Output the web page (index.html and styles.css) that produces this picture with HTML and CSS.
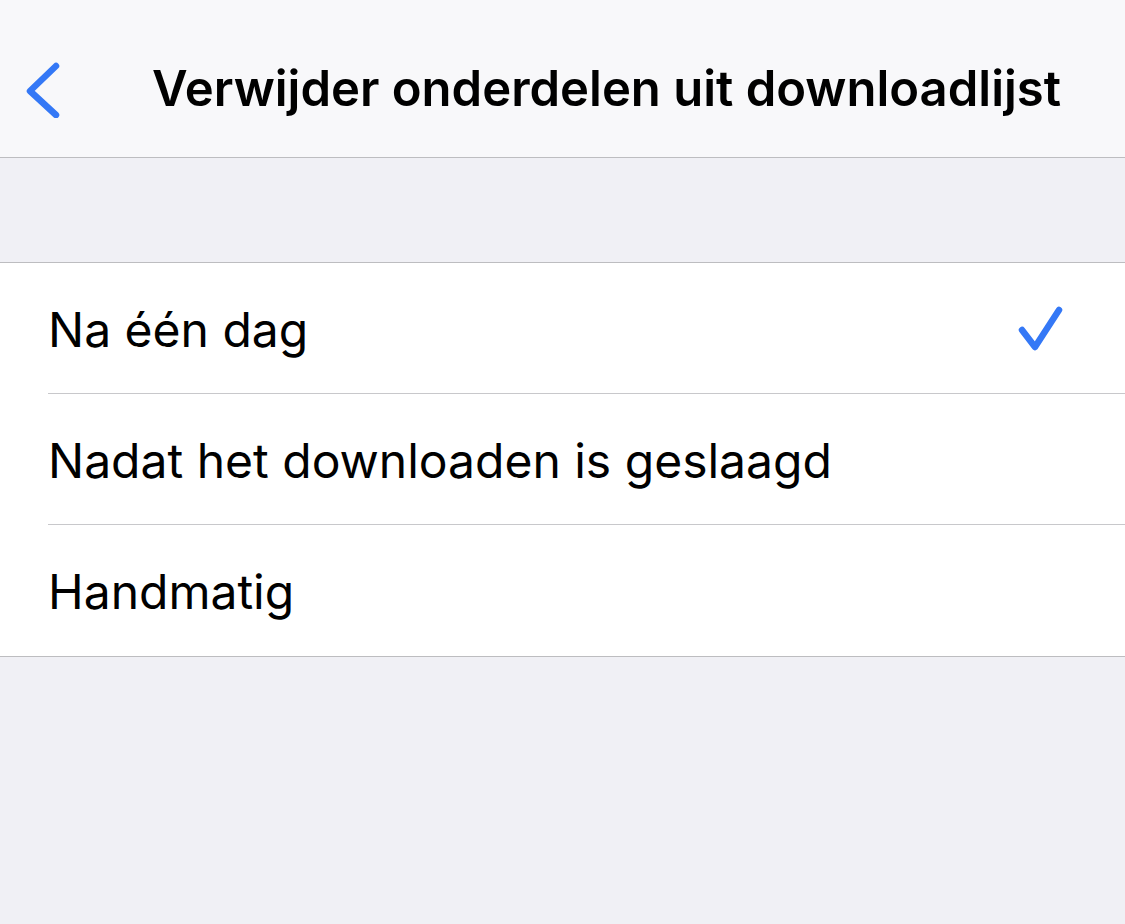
FILE: index.html
```html
<!DOCTYPE html>
<html lang="nl">
<head>
  <meta charset="UTF-8">
  <meta name="viewport" content="width=device-width, initial-scale=1">
  <title>Verwijder onderdelen uit downloadlijst</title>
  <link rel="stylesheet" href="styles.css">
</head>
<body>
  <header class="navbar">
    <a href="#" class="back-btn" aria-label="Terug">
      <svg width="40" height="60" viewBox="0 0 40 60">
        <path d="M31 8 L5 33 L31 57" fill="none" stroke="#3478f6" stroke-width="6.5" stroke-linecap="round" stroke-linejoin="round"/>
      </svg>
    </a>
    <h1 class="title">Verwijder onderdelen uit downloadlijst</h1>
  </header>

  <div class="spacer"></div>

  <ul class="options">
    <li class="option">
      <span class="label">Na één dag</span>
      <svg class="check" width="50" height="46" viewBox="0 0 50 46">
        <path d="M5 24 L18 41 L42 4" fill="none" stroke="#3478f6" stroke-width="6.5" stroke-linecap="round" stroke-linejoin="round"/>
      </svg>
    </li>
    <li class="option">
      <span class="label">Nadat het downloaden is geslaagd</span>
    </li>
    <li class="option">
      <span class="label">Handmatig</span>
    </li>
  </ul>
</body>
</html>
```

FILE: styles.css
```css
* {
  margin: 0;
  padding: 0;
  box-sizing: border-box;
}

body {
  font-family: Inter, "Liberation Sans", sans-serif;
  background: #f0f0f5;
  min-height: 100vh;
  color: #000;
}

.navbar {
  height: 158px;
  background: #f8f8fa;
  border-bottom: 1px solid #bdbdc0;
  display: flex;
  align-items: flex-start;
  padding-left: 25px;
  padding-top: 58px;
}

.back-btn {
  display: flex;
}

.title {
  margin-left: 87px;
  margin-top: 1px;
  font-size: 49px;
  line-height: 60px;
  font-weight: 600;
}

.spacer {
  height: 104px;
}

.options {
  list-style: none;
  background: #fff;
  border-top: 1px solid #bdbdc0;
  border-bottom: 1px solid #bdbdc0;
  padding-left: 48px;
}

.option {
  height: 131px;
  display: flex;
  align-items: center;
  justify-content: space-between;
  padding-right: 58px;
  border-bottom: 1px solid #c8c8cb;
}

.option:last-child {
  border-bottom: none;
}

.label {
  font-size: 48px;
  padding-top: 2px;
}

.check {
  margin-top: 2px;
}
```
